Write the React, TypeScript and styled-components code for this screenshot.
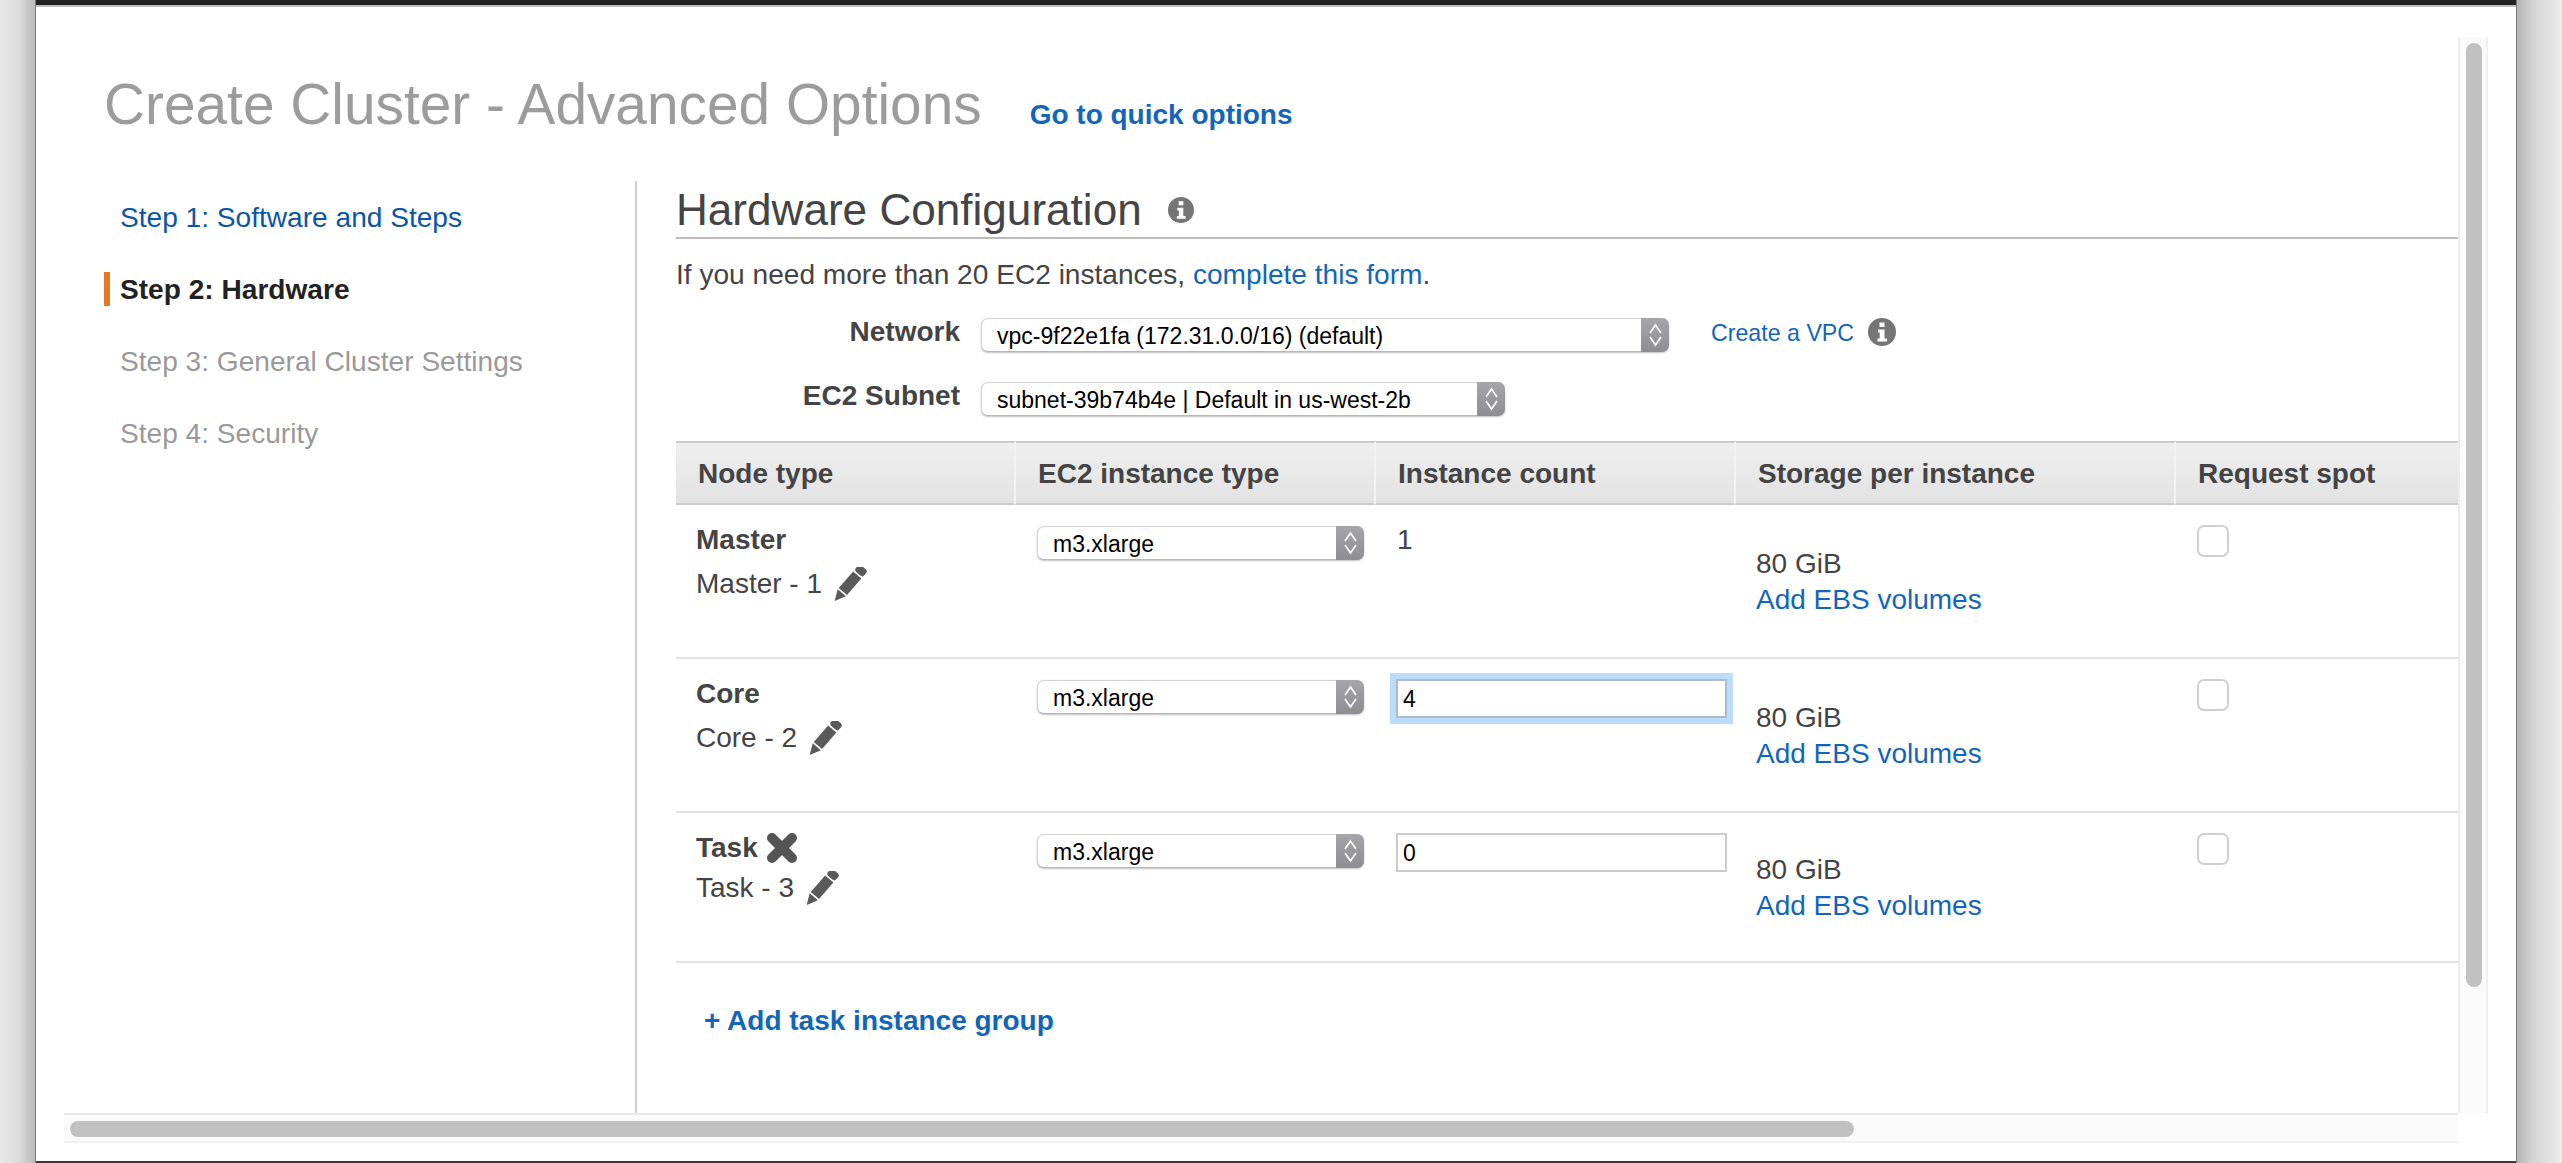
import React from 'react'
import styled, { createGlobalStyle } from 'styled-components'

const GlobalStyle = createGlobalStyle`
  html, body {
    margin: 0;
    padding: 0;
    height: 100%;
    overflow: hidden;
    background: #e8e8e8;
  }
  body {
    font-family: 'Liberation Sans', Arial, sans-serif;
    color: #444;
  }
  * {
    box-sizing: border-box;
  }
`

const Page = styled.div`
  display: flex;
  width: 2562px;
  height: 1163px;
`

const LeftGutter = styled.div`
  width: 36px;
  flex: none;
  background: linear-gradient(to right, #e8e8e8 0, #dcdcdc 18px, #bdbdbd 34px);
  border-right: 1px solid #7d7d7d;
`

const RightGutter = styled.div`
  flex: 1;
  background: linear-gradient(to right, #b4b4b4 0, #d4d4d4 16px, #e8e8e8 40px, #ebebeb 100%);
  border-left: 1px solid #7d7d7d;
`

const Window = styled.div`
  width: 2480px;
  flex: none;
  display: flex;
  flex-direction: column;
  background: #fff;
  border-top: 5px solid #222;
  border-bottom: 2px solid #3a3a3a;
`

const TopEdge = styled.div`
  height: 2px;
  flex: none;
  background: #c0c0c0;
`

const ScrollFrame = styled.div`
  display: grid;
  grid-template-columns: 2394px 30px;
  grid-template-rows: 1076px 30px;
  margin: 30px 0 0 28px;
`

const View = styled.div`
  display: flex;
  flex-direction: column;
  overflow: hidden;
  padding-left: 40px;
`

const VerticalTrack = styled.div`
  background: #fafafa;
  border-left: 2px solid #ececec;
  border-right: 2px solid #f0f0f0;
  padding: 6px 0 0 6px;
`

const VerticalThumb = styled.div`
  width: 16px;
  height: 944px;
  border-radius: 8px;
  background: #c1c1c1;
`

const HorizontalTrack = styled.div`
  background: #fafafa;
  border-top: 2px solid #e8e8e8;
  border-bottom: 2px solid #f0f0f0;
  padding: 6px 0 0 6px;
`

const HorizontalThumb = styled.div`
  width: 1784px;
  height: 16px;
  border-radius: 8px;
  background: #c1c1c1;
`

const TitleRow = styled.header`
  display: flex;
  align-items: flex-start;
  height: 144px;
  padding: 36px 0 0 0;
  flex: none;
`

const Title = styled.h1`
  margin: 0;
  font-size: 56.8px;
  line-height: 64px;
  font-weight: 400;
  color: #9c9c9c;
`

const QuickLink = styled.a`
  margin: 22px 0 0 48px;
  font-size: 28px;
  line-height: 40px;
  font-weight: 700;
  color: #1166bb;
`

const Body = styled.div`
  display: flex;
  flex: 1;
  min-height: 0;
`

const Sidebar = styled.nav`
  width: 533px;
  flex: none;
  display: flex;
  flex-direction: column;
  gap: 38px;
  padding-top: 19px;
  border-right: 2px solid #cfcfcf;
`

const Step = styled.div<{ $state: 'done' | 'active' | 'todo' }>`
  height: 34px;
  line-height: 35px;
  font-size: 28.1px;
  padding-left: 10px;
  border-left: 6px solid ${({ $state }) => ($state === 'active' ? '#e47b24' : 'transparent')};
  font-weight: ${({ $state }) => ($state === 'active' ? 700 : 400)};
  color: ${({ $state }) => ($state === 'done' ? '#0b55a8' : $state === 'active' ? '#222' : '#999')};
`

const Main = styled.main`
  flex: 1;
  min-width: 0;
  padding-left: 39px;
`

const SectionHeading = styled.div`
  display: flex;
  align-items: center;
  gap: 26px;
  height: 58px;
  padding-top: 2px;
  border-bottom: 2px solid #bbb;
`

const SectionTitle = styled.h2`
  margin: 0;
  font-size: 44.1px;
  line-height: 52px;
  font-weight: 400;
  color: #444;
`

const Intro = styled.p`
  margin: 18px 0 0;
  font-size: 28.1px;
  line-height: 36px;
  color: #444;
`

const BlueLink = styled.a`
  color: #1166bb;
`

const FormRow = styled.div<{ $gap: number }>`
  display: flex;
  align-items: flex-start;
  margin-top: ${({ $gap }) => $gap}px;
`

const FieldLabel = styled.label`
  width: 284px;
  margin-right: 21px;
  text-align: right;
  font-size: 28px;
  line-height: 28px;
  font-weight: 700;
  color: #444;
`

const SelectWrap = styled.div<{ $width: number }>`
  position: relative;
  width: ${({ $width }) => $width}px;
  height: 34px;
`

const NativeSelect = styled.select`
  appearance: none;
  display: block;
  width: 100%;
  height: 100%;
  padding: 2px 36px 0 15px;
  margin: 0;
  font-family: 'Liberation Sans', Arial, sans-serif;
  font-size: 23px;
  color: #000;
  background: #fff;
  border: 1px solid #d4d4d4;
  border-bottom-color: #b8b8b8;
  border-radius: 7px;
  box-shadow: 0 1px 2px rgba(0, 0, 0, 0.25);
  outline: none;
`

const Stepper = styled.span`
  position: absolute;
  top: 0;
  right: 0;
  bottom: 0;
  width: 28px;
  display: flex;
  align-items: center;
  justify-content: center;
  pointer-events: none;
  border-radius: 0 7px 7px 0;
  background: linear-gradient(to bottom, #a6a6aa, #8e8e92);
`

const CreateVpc = styled(BlueLink)`
  margin: 0 14px 0 42px;
  font-size: 23.2px;
  line-height: 30px;
`

const Table = styled.table`
  width: 1782px;
  margin-top: 25px;
  table-layout: fixed;
  border-collapse: separate;
  border-spacing: 0;
`

const HeadCell = styled.th<{ $width: number }>`
  width: ${({ $width }) => $width}px;
  height: 64px;
  padding: 2px 0 0 22px;
  text-align: left;
  font-size: 28px;
  font-weight: 700;
  color: #444;
  background: linear-gradient(to bottom, #efefef, #e2e2e2);
  border-top: 2px solid #ccc;
  border-bottom: 2px solid #ccc;
  border-right: 2px solid #f3f3f3;

  &:last-child {
    border-right: 0;
  }
`

const Row = styled.tr<{ $tight?: boolean }>`
  height: ${({ $tight }) => ($tight ? 150 : 154)}px;
`

const Cell = styled.td<{ $top?: number; $left?: number }>`
  vertical-align: top;
  padding: ${({ $top }) => $top ?? 0}px 0 0 ${({ $left }) => $left ?? 21}px;
  border-bottom: 2px solid #e2e2e2;
  font-size: 28px;
  color: #444;
`

const NodeName = styled.div`
  display: flex;
  align-items: center;
  gap: 8px;
  height: 34px;
  font-weight: 700;
`

const NodeSub = styled.div<{ $tight?: boolean }>`
  display: flex;
  align-items: center;
  gap: 9px;
  height: 34px;
  margin-top: ${({ $tight }) => ($tight ? 6 : 10)}px;
`

const Count = styled.div`
  height: 34px;
  line-height: 34px;
  padding-left: 1px;
`

const CountInput = styled.input<{ $focused?: boolean }>`
  display: block;
  width: 331px;
  height: 39px;
  margin: 0;
  padding: 2px 5px 0;
  font-family: 'Liberation Sans', Arial, sans-serif;
  font-size: 23px;
  color: #000;
  background: #fff;
  border: 2px solid ${({ $focused }) => ($focused ? '#a9bccd' : '#cccccc')};
  border-radius: 0;
  outline: none;
  box-shadow: ${({ $focused }) => ($focused ? '0 0 0 6px #bbdcfb' : 'none')};
`

const Storage = styled.div<{ $tight?: boolean }>`
  margin-top: ${({ $tight }) => ($tight ? 39 : 41)}px;
  margin-left: -1px;
  line-height: 36px;
`

const SpotCheck = styled.input`
  appearance: none;
  display: block;
  width: 32px;
  height: 32px;
  margin: 0;
  background: #fff;
  border: 2px solid #cfcfcf;
  border-radius: 7px;
`

const AddGroup = styled(BlueLink)`
  display: block;
  margin: 40px 0 0 28px;
  font-size: 28px;
  line-height: 36px;
  font-weight: 700;
`

const IconSvg = styled.svg`
  display: block;
  flex: none;
`

const SoftIcon = styled(IconSvg)`
  filter: blur(0.5px);
`

const InfoIcon = ({ size }: { size: number }) => (
  <IconSvg width={size} height={size} viewBox="0 0 28 28">
    <circle cx="14" cy="14" r="14" fill="#757575" />
    <rect x="11.5" y="4.5" width="5" height="4.5" fill="#fff" />
    <path d="M10 11.5h6.5v9H19v3H9.5v-3h2.2v-6H10z" fill="#fff" />
  </IconSvg>
)

const ChevronPair = () => (
  <IconSvg width="15" height="26" viewBox="0 0 15 26" fill="none" stroke="#fff" strokeWidth="1.7">
    <path d="M2 11 7.5 3 13 11" />
    <path d="M2 15 7.5 23 13 15" />
  </IconSvg>
)

const PencilIcon = () => (
  <SoftIcon width="36" height="35" viewBox="0 0 32 32">
    <g transform="rotate(41 16 16)" fill="#5a5a5a">
      <rect x="11" y="-4.5" width="10" height="7.5" rx="2.5" />
      <rect x="11" y="4.5" width="10" height="20" />
      <path d="M11 26h10L16 36z" />
    </g>
  </SoftIcon>
)

const RemoveIcon = () => (
  <SoftIcon width="32" height="32" viewBox="0 0 32 32">
    <path d="M6 6l20 20M26 6 6 26" stroke="#555" strokeWidth="10" strokeLinecap="round" />
  </SoftIcon>
)

const Select = ({ width, value }: { width: number; value: string }) => (
  <SelectWrap $width={width}>
    <NativeSelect defaultValue={value}>
      <option>{value}</option>
    </NativeSelect>
    <Stepper>
      <ChevronPair />
    </Stepper>
  </SelectWrap>
)

const steps: { label: string; state: 'done' | 'active' | 'todo' }[] = [
  { label: 'Step 1: Software and Steps', state: 'done' },
  { label: 'Step 2: Hardware', state: 'active' },
  { label: 'Step 3: General Cluster Settings', state: 'todo' },
  { label: 'Step 4: Security', state: 'todo' },
]

const columns = [
  { title: 'Node type', width: 340 },
  { title: 'EC2 instance type', width: 360 },
  { title: 'Instance count', width: 360 },
  { title: 'Storage per instance', width: 440 },
  { title: 'Request spot', width: 282 },
]

type NodeRow = {
  name: string
  sub: string
  count: string
  removable?: boolean
  focused?: boolean
  editable?: boolean
}

const nodes: NodeRow[] = [
  { name: 'Master', sub: 'Master - 1', count: '1' },
  { name: 'Core', sub: 'Core - 2', count: '4', editable: true, focused: true },
  { name: 'Task', sub: 'Task - 3', count: '0', editable: true, removable: true },
]

const App = () => (
  <>
    <GlobalStyle />
    <Page>
      <LeftGutter />
      <Window>
        <TopEdge />
        <ScrollFrame>
          <View>
            <TitleRow>
              <Title>Create Cluster - Advanced Options</Title>
              <QuickLink>Go to quick options</QuickLink>
            </TitleRow>
            <Body>
              <Sidebar>
                {steps.map((step) => (
                  <Step key={step.label} $state={step.state}>
                    {step.label}
                  </Step>
                ))}
              </Sidebar>
              <Main>
                <SectionHeading>
                  <SectionTitle>Hardware Configuration</SectionTitle>
                  <InfoIcon size={26} />
                </SectionHeading>
                <Intro>
                  If you need more than 20 EC2 instances, <BlueLink>complete this form</BlueLink>.
                </Intro>
                <FormRow $gap={25}>
                  <FieldLabel>Network</FieldLabel>
                  <Select width={688} value="vpc-9f22e1fa (172.31.0.0/16) (default)" />
                  <CreateVpc>Create a VPC</CreateVpc>
                  <InfoIcon size={28} />
                </FormRow>
                <FormRow $gap={30}>
                  <FieldLabel>EC2 Subnet</FieldLabel>
                  <Select width={524} value="subnet-39b74b4e | Default in us-west-2b" />
                </FormRow>
                <Table>
                  <thead>
                    <tr>
                      {columns.map((col) => (
                        <HeadCell key={col.title} $width={col.width}>
                          {col.title}
                        </HeadCell>
                      ))}
                    </tr>
                  </thead>
                  <tbody>
                    {nodes.map((node) => (
                      <Row key={node.name} $tight={node.removable}>
                        <Cell $top={18} $left={20}>
                          <NodeName>
                            {node.name}
                            {node.removable && <RemoveIcon />}
                          </NodeName>
                          <NodeSub $tight={node.removable}>
                            {node.sub}
                            <PencilIcon />
                          </NodeSub>
                        </Cell>
                        <Cell $top={21}>
                          <Select width={327} value="m3.xlarge" />
                        </Cell>
                        <Cell $top={node.editable ? 20 : 18} $left={20}>
                          {node.editable ? (
                            <CountInput $focused={node.focused} defaultValue={node.count} />
                          ) : (
                            <Count>{node.count}</Count>
                          )}
                        </Cell>
                        <Cell>
                          <Storage $tight={node.removable}>
                            80 GiB
                            <br />
                            <BlueLink>Add EBS volumes</BlueLink>
                          </Storage>
                        </Cell>
                        <Cell $top={20}>
                          <SpotCheck type="checkbox" />
                        </Cell>
                      </Row>
                    ))}
                  </tbody>
                </Table>
                <AddGroup>+ Add task instance group</AddGroup>
              </Main>
            </Body>
          </View>
          <VerticalTrack>
            <VerticalThumb />
          </VerticalTrack>
          <HorizontalTrack>
            <HorizontalThumb />
          </HorizontalTrack>
        </ScrollFrame>
      </Window>
      <RightGutter />
    </Page>
  </>
)

export default App
